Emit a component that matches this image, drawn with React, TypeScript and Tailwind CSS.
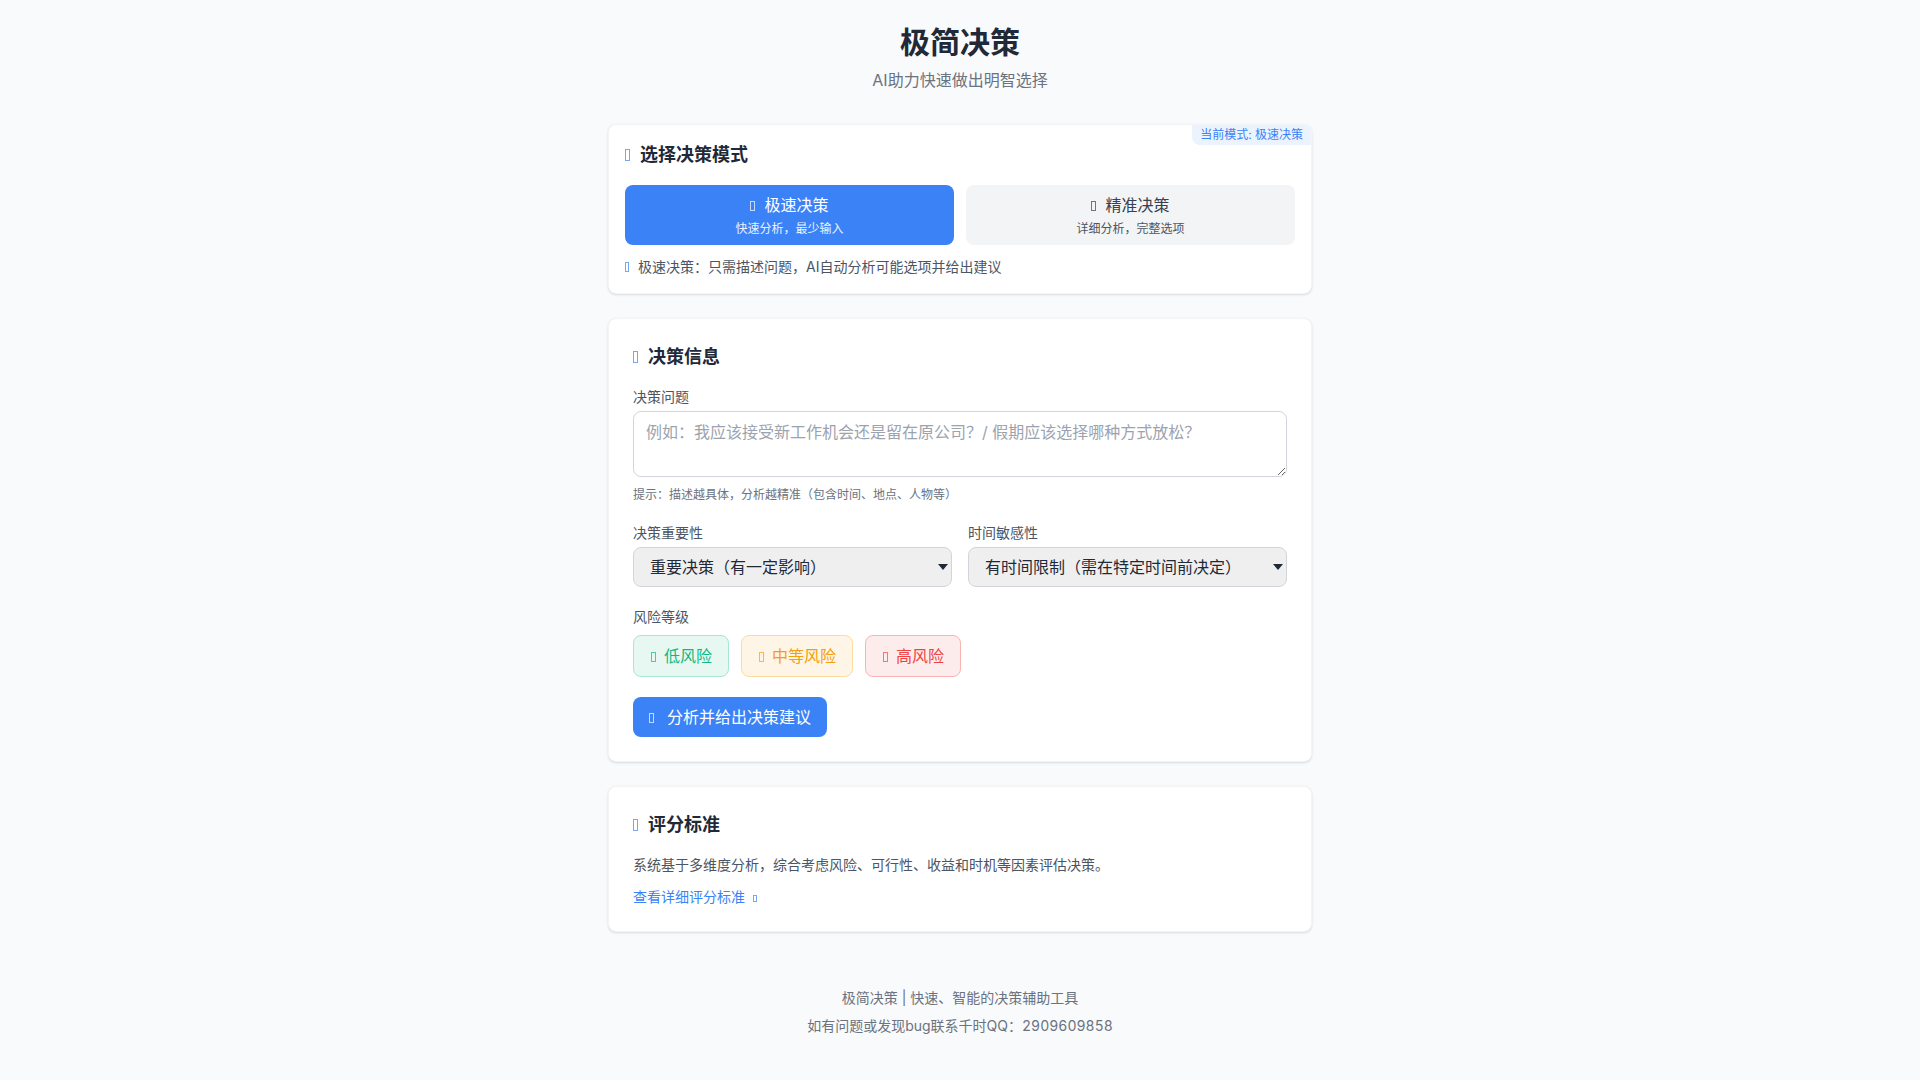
const FONT = "font-['Inter','Noto_Sans_CJK_SC',sans-serif]"

// the reference shows missing-glyph boxes where its icon font failed to load
function Tofu({ className }: { className: string }) {
  return <span className={`inline-block border border-current opacity-70 ${className}`} />
}

function SectionTitle({ children }: { children: string }) {
  return (
    <h2 className="mb-4 text-lg font-semibold text-[#1f2937]">
      <Tofu className="mr-[10px] h-[12px] w-[5px] text-[#3b82f6]" />
      {children}
    </h2>
  )
}

function Field({ label, children }: { label: string; children: React.ReactNode }) {
  return (
    <div>
      <label className="mb-1 block text-sm text-[#4b5563]">{label}</label>
      {children}
    </div>
  )
}

function SelectBox({ value, options }: { value: string; options: string[] }) {
  return (
    <div className="relative">
      <select
        defaultValue={value}
        className="h-10 w-full appearance-none rounded-lg border border-[#d1d5db] bg-[#efefef] px-4 text-base text-[#1f2937]"
      >
        {options.map((o) => (
          <option key={o}>{o}</option>
        ))}
      </select>
      <svg
        viewBox="0 0 10 6"
        className="pointer-events-none absolute top-1/2 right-[4px] h-[6px] w-[10px] -translate-y-1/2 fill-[#1f2937]"
      >
        <path d="M0 0h10L5 6z" />
      </svg>
    </div>
  )
}

const risks = [
  { label: '低风险', cls: 'border-[#a7e8cf] bg-[#e7f8f2] text-[#10b981]' },
  { label: '中等风险', cls: 'border-[#fcdc9e] bg-[#fef5e6] text-[#f59e0b]' },
  { label: '高风险', cls: 'border-[#fab4b4] bg-[#fdecec] text-[#ef4444]' },
]

export default function App() {
  return (
    <div className={`min-h-screen bg-[#f9fafb] ${FONT}`}>
      <div className="mx-auto max-w-3xl px-8 pt-6 pb-11">
        <header className="mb-8 text-center">
          <h1 className="text-3xl font-bold text-[#1f2937]">极简决策</h1>
          <p className="mt-2 text-base text-[#6b7280]">AI助力快速做出明智选择</p>
        </header>

        <section className="relative mb-6 overflow-hidden rounded-lg border border-[#f3f4f6] bg-white p-4 shadow-sm">
          <span className="absolute top-0 right-0 rounded-bl-lg bg-[#ebf3fe] px-2 py-0.5 text-xs text-[#3b82f6]">
            当前模式: 极速决策
          </span>
          <SectionTitle>选择决策模式</SectionTitle>
          <div className="grid grid-cols-2 gap-3">
            <button className="h-[60px] rounded-lg bg-[#3b82f6] text-white">
              <div className="text-base">
                <Tofu className="mr-[9px] h-[10px] w-[5px]" />
                极速决策
              </div>
              <div className="mt-1 text-xs opacity-90">快速分析，最少输入</div>
            </button>
            <button className="h-[60px] rounded-lg bg-[#f3f4f6] text-[#374151]">
              <div className="text-base">
                <Tofu className="mr-[9px] h-[10px] w-[5px]" />
                精准决策
              </div>
              <div className="mt-1 text-xs text-[#4b5563]">详细分析，完整选项</div>
            </button>
          </div>
          <p className="mt-3 text-sm text-[#4b5563]">
            <Tofu className="mr-[9px] h-[10px] w-[4px] text-[#3b82f6]" />
            极速决策：只需描述问题，AI自动分析可能选项并给出建议
          </p>
        </section>

        <section className="mb-6 rounded-lg border border-[#f3f4f6] bg-white p-6 shadow-sm">
          <SectionTitle>决策信息</SectionTitle>
          <Field label="决策问题">
            <textarea
              rows={2}
              placeholder="例如：我应该接受新工作机会还是留在原公司？/ 假期应该选择哪种方式放松？"
              className="block w-full rounded-lg border border-[#d1d5db] px-3 py-2 text-base text-[#1f2937] placeholder:text-[#9ca3af]"
            />
          </Field>
          <p className="mt-[10px] mb-5 text-xs text-[#6b7280]">提示：描述越具体，分析越精准（包含时间、地点、人物等）</p>
          <div className="mb-5 grid grid-cols-2 gap-4">
            <Field label="决策重要性">
              <SelectBox value="重要决策（有一定影响）" options={['重要决策（有一定影响）']} />
            </Field>
            <Field label="时间敏感性">
              <SelectBox value="有时间限制（需在特定时间前决定）" options={['有时间限制（需在特定时间前决定）']} />
            </Field>
          </div>
          <div className="mb-5">
            <label className="mb-2 block text-sm text-[#4b5563]">风险等级</label>
            <div className="flex gap-3">
              {risks.map((r) => (
                <button key={r.label} className={`rounded-lg border px-4 py-2 text-base ${r.cls}`}>
                  <Tofu className="mr-2 ml-px h-[10px] w-[5px]" />
                  {r.label}
                </button>
              ))}
            </div>
          </div>
          <button className="h-10 rounded-lg bg-[#3b82f6] px-4 text-base text-white">
            <Tofu className="mr-[13px] h-[10px] w-[5px]" />
            分析并给出决策建议
          </button>
        </section>

        <section className="mb-6 rounded-lg border border-[#f3f4f6] bg-white p-6 shadow-sm">
          <SectionTitle>评分标准</SectionTitle>
          <p className="text-sm text-[#4b5563]">系统基于多维度分析，综合考虑风险、可行性、收益和时机等因素评估决策。</p>
          <a className="mt-3 block text-sm text-[#3b82f6]">
            查看详细评分标准
            <Tofu className="ml-2 h-[7px] w-[4px]" />
          </a>
        </section>

        <footer className="mt-14 text-center text-sm text-[#6b7280]">
          <p className="mb-2">极简决策 | 快速、智能的决策辅助工具</p>
          <p className="tabular-nums">如有问题或发现bug联系千时QQ：2909609858</p>
        </footer>
      </div>
    </div>
  )
}
